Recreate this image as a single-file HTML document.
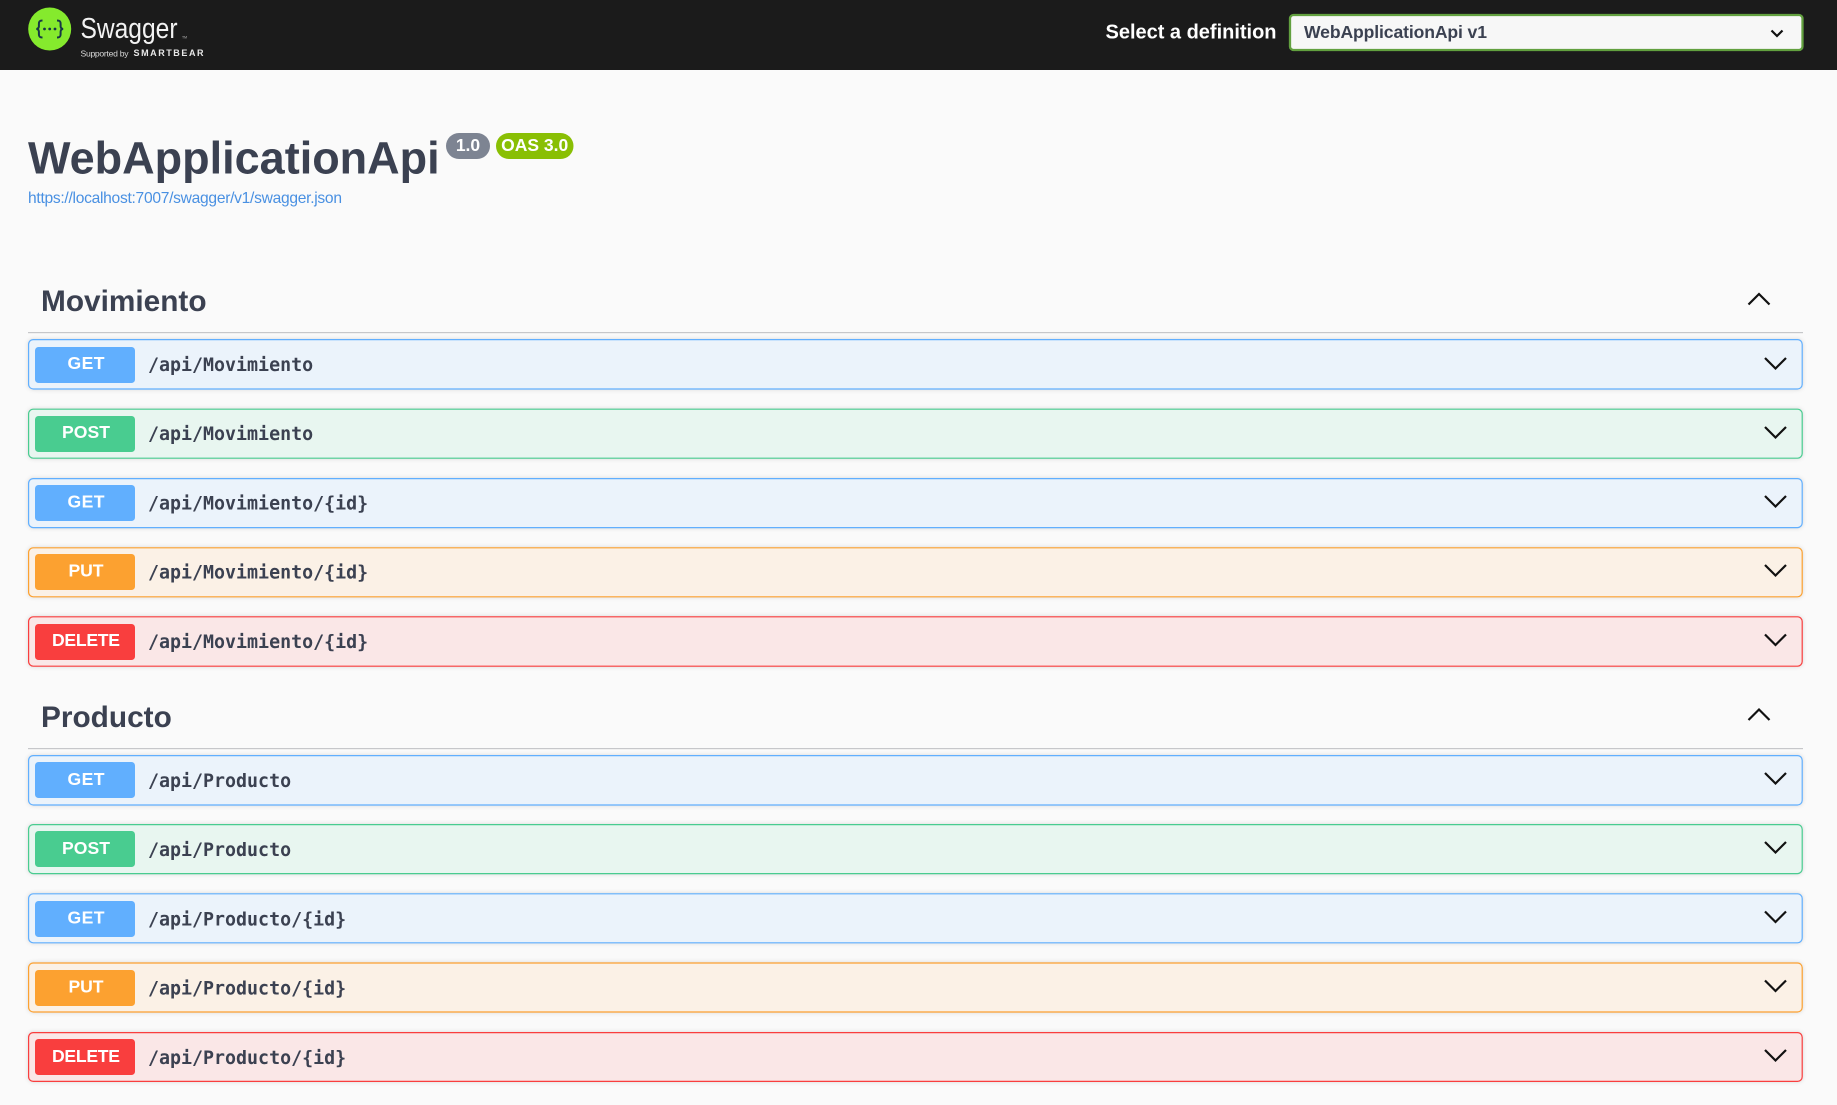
<!DOCTYPE html>
<html><head><meta charset="utf-8"><title>Swagger UI</title>
<style>
html,body{margin:0;padding:0;background:#fafafa;width:1837px;height:1105px;overflow:hidden}
svg{display:block;position:absolute;left:0;top:0}
text{font-family:"Liberation Sans",sans-serif}
.m{font-family:"DejaVu Sans Mono","Liberation Mono",monospace;font-weight:700;font-size:18.3px;fill:#3b4151}
.b{font-weight:700;font-size:17.6px;fill:#fff;text-anchor:middle}
.h{font-weight:700;font-size:29.8px;fill:#3b4151}
.c{fill:none;stroke:#111;stroke-width:2.2}
.r{filter:drop-shadow(0 0 2px rgba(0,0,0,.14))}
</style></head><body>
<svg width="1837" height="1105" viewBox="0 0 1837 1105" xmlns="http://www.w3.org/2000/svg">
<rect width="1837" height="1105" fill="#fafafa"/>
<rect width="1837" height="70" fill="#1b1b1b"/>
<circle cx="49.7" cy="29" r="21.5" fill="#85ea2d"/>
<path d="M42.5 20.5c-3 0-3.6 1-3.6 3.2v2.6c0 1.6-.8 2.5-2.5 2.7 1.7.2 2.5 1.1 2.5 2.7v2.6c0 2.2.6 3.2 3.6 3.2M57 20.5c3 0 3.6 1 3.6 3.2v2.6c0 1.6.8 2.5 2.5 2.7-1.7.2-2.5 1.1-2.5 2.7v2.6c0 2.2-.6 3.2-3.6 3.2" fill="none" stroke="#173646" stroke-width="2"/>
<circle cx="44.5" cy="29" r="1.4" fill="#173646"/><circle cx="49.7" cy="29" r="1.4" fill="#173646"/><circle cx="55" cy="29" r="1.4" fill="#173646"/>
<text x="80.5" y="38" font-size="28.5" fill="#f2f2f2" textLength="97" lengthAdjust="spacingAndGlyphs">Swagger</text>
<text x="182" y="38.5" font-size="3.5" fill="#bbb">TM</text>
<text x="80.5" y="56.5" font-size="8.6" fill="#d8d8d8" textLength="48">Supported by</text>
<text x="133.5" y="56" font-size="9" font-weight="700" fill="#e8e8e8" textLength="70">SMARTBEAR</text>

<text x="1105.5" y="38.5" font-size="20" font-weight="700" fill="#fff" textLength="171">Select a definition</text>
<rect x="1290" y="15" width="512.5" height="35" rx="3.5" fill="#f7f7f7" stroke="#62a03f" stroke-width="2.3"/>
<text x="1304" y="38" font-size="17.6" font-weight="700" fill="#3b4151" textLength="183">WebApplicationApi v1</text>
<path d="M1771.5 30.5l5.5 5.5 5.5-5.5" fill="none" stroke="#111" stroke-width="2.2"/>

<text x="28" y="173.5" font-size="45" font-weight="700" fill="#3b4151">WebApplicationApi</text>
<rect x="446" y="133" width="44" height="26" rx="13" fill="#7d8492"/>
<text x="468" y="151" font-size="17.5" font-weight="700" fill="#fff" text-anchor="middle">1.0</text>
<rect x="496" y="133" width="77.5" height="26" rx="13" fill="#89bf04"/>
<text x="534.7" y="151" font-size="17.5" font-weight="700" fill="#fff" text-anchor="middle">OAS 3.0</text>
<text x="28" y="203" font-size="15.6" fill="#4990e2" textLength="314">https://localhost:7007/swagger/v1/swagger.json</text>

<!-- Movimiento -->
<text class="h" x="41" y="311">Movimiento</text>
<rect x="28" y="332" width="1775" height="1.2" fill="#c6c7ca"/>
<path class="c" d="M1748.5 304.5l10.5-10.5 10.5 10.5"/>

<g><rect class="r" x="28.6" y="339.6" width="1773.6" height="49.4" rx="4.7" fill="#ebf3fb" stroke="#61affe" stroke-width="1.2"/><rect x="35" y="347" width="100" height="36" rx="3.5" fill="#61affe"/><text class="b" x="86" y="369" textLength="37">GET</text><text class="m" x="148" y="371">/api/Movimiento</text><path class="c" d="M1765 358l10.5 10.5 10.5-10.5"/></g>
<g><rect class="r" x="28.6" y="409.2" width="1773.6" height="49" rx="4.7" fill="#e8f6f0" stroke="#49cc90" stroke-width="1.2"/><rect x="35" y="416" width="100" height="36" rx="3.5" fill="#49cc90"/><text class="b" x="86" y="438" textLength="48">POST</text><text class="m" x="148" y="440">/api/Movimiento</text><path class="c" d="M1765 427l10.5 10.5 10.5-10.5"/></g>
<g><rect class="r" x="28.6" y="478.6" width="1773.6" height="49" rx="4.7" fill="#ebf3fb" stroke="#61affe" stroke-width="1.2"/><rect x="35" y="485" width="100" height="36" rx="3.5" fill="#61affe"/><text class="b" x="86" y="507.5" textLength="37">GET</text><text class="m" x="148" y="509.5">/api/Movimiento/{id}</text><path class="c" d="M1765 496l10.5 10.5 10.5-10.5"/></g>
<g><rect class="r" x="28.6" y="547.8" width="1773.6" height="49" rx="4.7" fill="#fbf1e6" stroke="#fca130" stroke-width="1.2"/><rect x="35" y="554" width="100" height="36" rx="3.5" fill="#fca130"/><text class="b" x="86" y="576.5" textLength="35">PUT</text><text class="m" x="148" y="578.5">/api/Movimiento/{id}</text><path class="c" d="M1765 565l10.5 10.5 10.5-10.5"/></g>
<g><rect class="r" x="28.6" y="616.8" width="1773.6" height="49.4" rx="4.7" fill="#fae7e7" stroke="#f93e3e" stroke-width="1.2"/><rect x="35" y="624" width="100" height="36" rx="3.5" fill="#f93e3e"/><text class="b" x="86" y="646" textLength="68">DELETE</text><text class="m" x="148" y="648">/api/Movimiento/{id}</text><path class="c" d="M1765 634.5l10.5 10.5 10.5-10.5"/></g>

<!-- Producto -->
<text class="h" x="41" y="727">Producto</text>
<rect x="28" y="748" width="1775" height="1.2" fill="#c6c7ca"/>
<path class="c" d="M1748.5 720l10.5-10.5 10.5 10.5"/>

<g><rect class="r" x="28.6" y="755.6" width="1773.6" height="49.4" rx="4.7" fill="#ebf3fb" stroke="#61affe" stroke-width="1.2"/><rect x="35" y="762" width="100" height="36" rx="3.5" fill="#61affe"/><text class="b" x="86" y="785" textLength="37">GET</text><text class="m" x="148" y="787">/api/Producto</text><path class="c" d="M1765 773l10.5 10.5 10.5-10.5"/></g>
<g><rect class="r" x="28.6" y="824.6" width="1773.6" height="49" rx="4.7" fill="#e8f6f0" stroke="#49cc90" stroke-width="1.2"/><rect x="35" y="831" width="100" height="36" rx="3.5" fill="#49cc90"/><text class="b" x="86" y="854" textLength="48">POST</text><text class="m" x="148" y="856">/api/Producto</text><path class="c" d="M1765 842l10.5 10.5 10.5-10.5"/></g>
<g><rect class="r" x="28.6" y="893.8" width="1773.6" height="49" rx="4.7" fill="#ebf3fb" stroke="#61affe" stroke-width="1.2"/><rect x="35" y="901" width="100" height="36" rx="3.5" fill="#61affe"/><text class="b" x="86" y="923.5" textLength="37">GET</text><text class="m" x="148" y="925.5">/api/Producto/{id}</text><path class="c" d="M1765 911.5l10.5 10.5 10.5-10.5"/></g>
<g><rect class="r" x="28.6" y="963" width="1773.6" height="49" rx="4.7" fill="#fbf1e6" stroke="#fca130" stroke-width="1.2"/><rect x="35" y="970" width="100" height="36" rx="3.5" fill="#fca130"/><text class="b" x="86" y="992.5" textLength="35">PUT</text><text class="m" x="148" y="994.5">/api/Producto/{id}</text><path class="c" d="M1765 980.5l10.5 10.5 10.5-10.5"/></g>
<g><rect class="r" x="28.6" y="1032.6" width="1773.6" height="48.8" rx="4.7" fill="#fae7e7" stroke="#f93e3e" stroke-width="1.2"/><rect x="35" y="1039" width="100" height="36" rx="3.5" fill="#f93e3e"/><text class="b" x="86" y="1062" textLength="68">DELETE</text><text class="m" x="148" y="1064">/api/Producto/{id}</text><path class="c" d="M1765 1050l10.5 10.5 10.5-10.5"/></g>
</svg>
</body></html>
